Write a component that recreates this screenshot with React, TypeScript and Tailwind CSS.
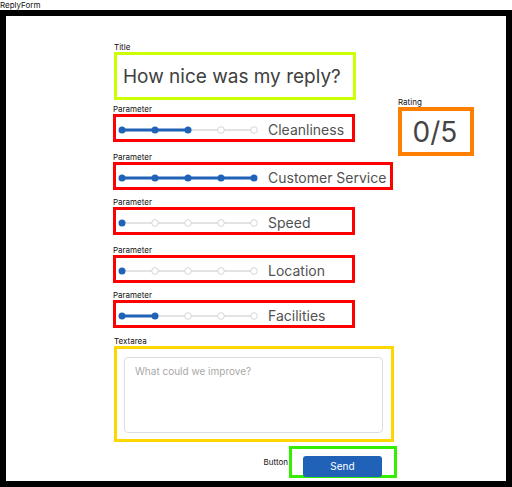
import React from "react";

const BLUE = "#1f62b8";

function Slider({ value }: { value: number }) {
  const xs = [4, 37, 70, 103, 136];
  const activeEnd = xs[value - 1];
  return (
    <svg width="140" height="10" viewBox="0 0 140 10" className="shrink-0">
      <line x1={4} y1={5} x2={136} y2={5} stroke="#e3e3e3" strokeWidth={2} />
      {value > 1 && (
        <line x1={4} y1={5} x2={activeEnd} y2={5} stroke={BLUE} strokeWidth={3} />
      )}
      {xs.map((x, i) =>
        i < value ? (
          <circle key={i} cx={x} cy={5} r={3.5} fill={BLUE} />
        ) : (
          <circle key={i} cx={x} cy={5} r={3.3} fill="#ffffff" stroke="#d6d6d6" strokeWidth={1} />
        )
      )}
    </svg>
  );
}

function Label({ children }: { children: React.ReactNode }) {
  return <div className="h-[10px] text-[8px] leading-[10px] text-[#111]">{children}</div>;
}

const params: { name: string; value: number; wide: boolean; mt: string }[] = [
  { name: "Cleanliness", value: 3, wide: false, mt: "mt-[4px]" },
  { name: "Customer Service", value: 5, wide: true, mt: "mt-[10px]" },
  { name: "Speed", value: 1, wide: false, mt: "mt-[7px]" },
  { name: "Location", value: 1, wide: false, mt: "mt-[10px]" },
  { name: "Facilities", value: 2, wide: false, mt: "mt-[7px]" },
];

export default function App() {
  return (
    <div className="w-[512px] h-[487px] bg-white font-['Inter',sans-serif] overflow-hidden">
      <div className="h-[10px] text-[8px] leading-[10px] text-[#111]">ReplyForm</div>
      <div className="w-[512px] h-[477px] border-[6px] border-black bg-white">
        <div className="flex pl-[108px] pt-[26px]">
          <div className="w-[284px] flex flex-col items-start">
            <Label>Title</Label>
            <div className="w-[242px] h-[48px] border-[3px] border-[#ccff00] flex items-center pl-[6px]">
              <span className="text-[19px] leading-none text-[#404040]">How nice was my reply?</span>
            </div>
            {params.map((p) => (
              <div key={p.name} className={p.mt + " -ml-[1px]"}>
                <Label>Parameter</Label>
                <div
                  className={
                    (p.wide ? "w-[280px]" : "w-[242px]") +
                    " h-[28px] border-[3px] border-[#ff0000] flex items-center pl-[2px] pt-[4px]"
                  }
                >
                  <Slider value={p.value} />
                  <span className="ml-[10px] text-[14px] leading-none text-[#525252] whitespace-nowrap">
                    {p.name}
                  </span>
                </div>
              </div>
            ))}
            <div className="mt-[8px]">
              <Label>Textarea</Label>
              <div className="w-[280px] h-[96px] border-[3px] border-[#ffd700] pl-[7px] pr-[8px] pt-[8px] pb-[6px]">
                <textarea
                  placeholder="What could we improve?"
                  className="w-full h-full resize-none border border-[#dedede] rounded-[4px] px-[10px] py-[6px] text-[10px] leading-[14px] text-[#333] placeholder:text-[#a9a9a9] outline-none font-['Inter',sans-serif]"
                />
              </div>
            </div>
            <div className="mt-[4px] w-[283px] flex justify-end items-center">
              <span className="text-[8px] leading-[10px] text-[#111] mr-[1px]">Button</span>
              <div className="w-[108px] h-[32px] border-[3px] border-[#33ee00] pl-[11px] pt-[3px]">
                <button className="w-[79px] h-[21px] rounded-[3px] bg-[#1f62b8] text-white text-[10px] leading-none font-['Inter',sans-serif]">
                  Send
                </button>
              </div>
            </div>
          </div>
          <div className="mt-[55px] flex flex-col">
            <Label>Rating</Label>
            <div className="w-[76px] h-[49px] border-[4px] border-[#ff8000] flex items-center justify-center">
              <span className="text-[28px] leading-none text-[#444] -ml-[2px]">0/5</span>
            </div>
          </div>
        </div>
      </div>
    </div>
  );
}
